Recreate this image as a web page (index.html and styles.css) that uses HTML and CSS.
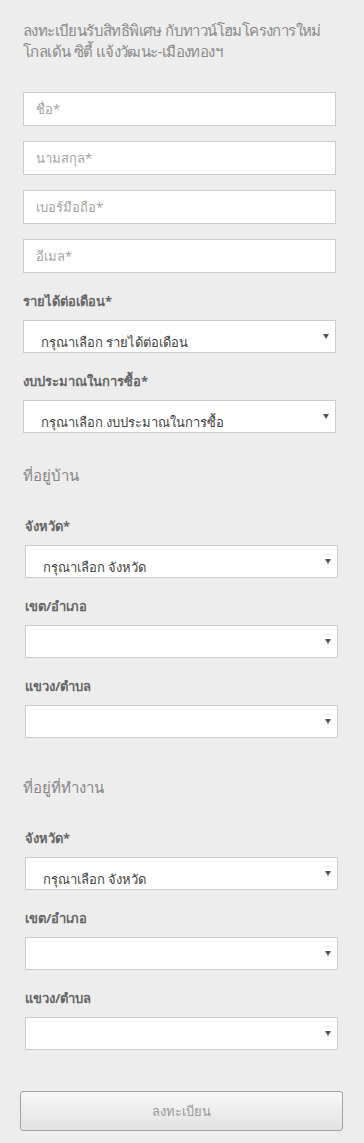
FILE: index.html
```html
<!DOCTYPE html>
<html lang="th">
<head>
    <meta charset="UTF-8">
    <meta name="viewport" content="width=device-width, initial-scale=1.0">
    <title>ลงทะเบียน</title>
    <link rel="stylesheet" href="styles.css">
</head>
<body>
    <form class="reg-form" onsubmit="return false;">
        <h1 class="intro">ลงทะเบียนรับสิทธิพิเศษ กับทาวน์โฮมโครงการใหม่<br>โกลเด้น ซิตี้ แจ้งวัฒนะ-เมืองทองฯ</h1>

        <div class="inputs">
            <input class="field" type="text" placeholder="ชื่อ*">
            <input class="field" type="text" placeholder="นามสกุล*">
            <input class="field" type="tel" placeholder="เบอร์มือถือ*">
            <input class="field" type="email" placeholder="อีเมล*">
        </div>

        <div class="group">
            <label class="label">รายได้ต่อเดือน*</label>
            <div class="select-wrap">
                <select class="select"><option>กรุณาเลือก รายได้ต่อเดือน</option></select>
            </div>
        </div>
        <div class="group">
            <label class="label">งบประมาณในการซื้อ*</label>
            <div class="select-wrap">
                <select class="select"><option>กรุณาเลือก งบประมาณในการซื้อ</option></select>
            </div>
        </div>

        <section class="address">
            <h2 class="section-title">ที่อยู่บ้าน</h2>
            <div class="group">
                <label class="label">จังหวัด*</label>
                <div class="select-wrap">
                    <select class="select"><option>กรุณาเลือก จังหวัด</option></select>
                </div>
            </div>
            <div class="group">
                <label class="label">เขต/อำเภอ</label>
                <div class="select-wrap">
                    <select class="select"><option></option></select>
                </div>
            </div>
            <div class="group">
                <label class="label">แขวง/ตำบล</label>
                <div class="select-wrap">
                    <select class="select"><option></option></select>
                </div>
            </div>
        </section>

        <section class="address">
            <h2 class="section-title">ที่อยู่ที่ทำงาน</h2>
            <div class="group">
                <label class="label">จังหวัด*</label>
                <div class="select-wrap">
                    <select class="select"><option>กรุณาเลือก จังหวัด</option></select>
                </div>
            </div>
            <div class="group">
                <label class="label">เขต/อำเภอ</label>
                <div class="select-wrap">
                    <select class="select"><option></option></select>
                </div>
            </div>
            <div class="group">
                <label class="label">แขวง/ตำบล</label>
                <div class="select-wrap">
                    <select class="select"><option></option></select>
                </div>
            </div>
        </section>

        <button class="submit" type="submit">ลงทะเบียน</button>
    </form>
</body>
</html>
```

FILE: styles.css
```css
/* Base */
html,
body {
    margin: 0;
    background: #ededed;
}

body,
input,
select,
button {
    font-family: 'Noto Sans', 'DejaVu Sans', sans-serif;
}

.reg-form {
    display: flex;
    flex-direction: column;
    padding: 20px 28px 12px 23px;
}

.intro {
    margin: 0;
    font-size: 15px;
    line-height: 21px;
    letter-spacing: -0.6px;
    font-weight: normal;
    color: #8a8a8a;
    white-space: nowrap;
}

/* Text inputs */
.inputs {
    display: flex;
    flex-direction: column;
    gap: 15px;
    margin-top: 30px;
}

.field {
    box-sizing: border-box;
    height: 34px;
    margin: 0;
    padding: 0 12px;
    border: 1px solid #ccc;
    border-radius: 0;
    background: #fff;
    font-size: 13px;
    color: #444;
}

.field::placeholder {
    color: #a5a5a5;
}

/* Select groups */
.group {
    display: flex;
    flex-direction: column;
    margin-top: 18px;
}

.label {
    margin-bottom: 9px;
    font-size: 13px;
    line-height: 20px;
    font-weight: bold;
    color: #666;
}

.select-wrap {
    position: relative;
}

.select-wrap::after {
    content: "";
    position: absolute;
    right: 7px;
    top: 14px;
    border-left: 3.5px solid transparent;
    border-right: 3.5px solid transparent;
    border-top: 5px solid #555;
    pointer-events: none;
}

.select {
    appearance: none;
    -webkit-appearance: none;
    box-sizing: border-box;
    display: block;
    width: 100%;
    height: 33px;
    margin: 0;
    padding: 10px 17px 0;
    border: 1px solid #ccc;
    border-radius: 0;
    background: #fff;
    font-size: 13px;
    color: #444;
}

/* Address sections */
.address {
    display: flex;
    flex-direction: column;
    padding-bottom: 7px;
}

.address .group {
    margin-left: 2px;
    margin-right: -2px;
}

.section-title {
    margin: 32px 0 12px;
    font-size: 15px;
    line-height: 21px;
    font-weight: normal;
    color: #858585;
}

/* Submit */
.submit {
    height: 40px;
    margin: 34px -7px 0 -3px;
    border: 1px solid #a3a3a3;
    border-radius: 3px;
    background: linear-gradient(#f8f8f8, #e2e2e2);
    font-size: 13px;
    color: #999;
}
```
